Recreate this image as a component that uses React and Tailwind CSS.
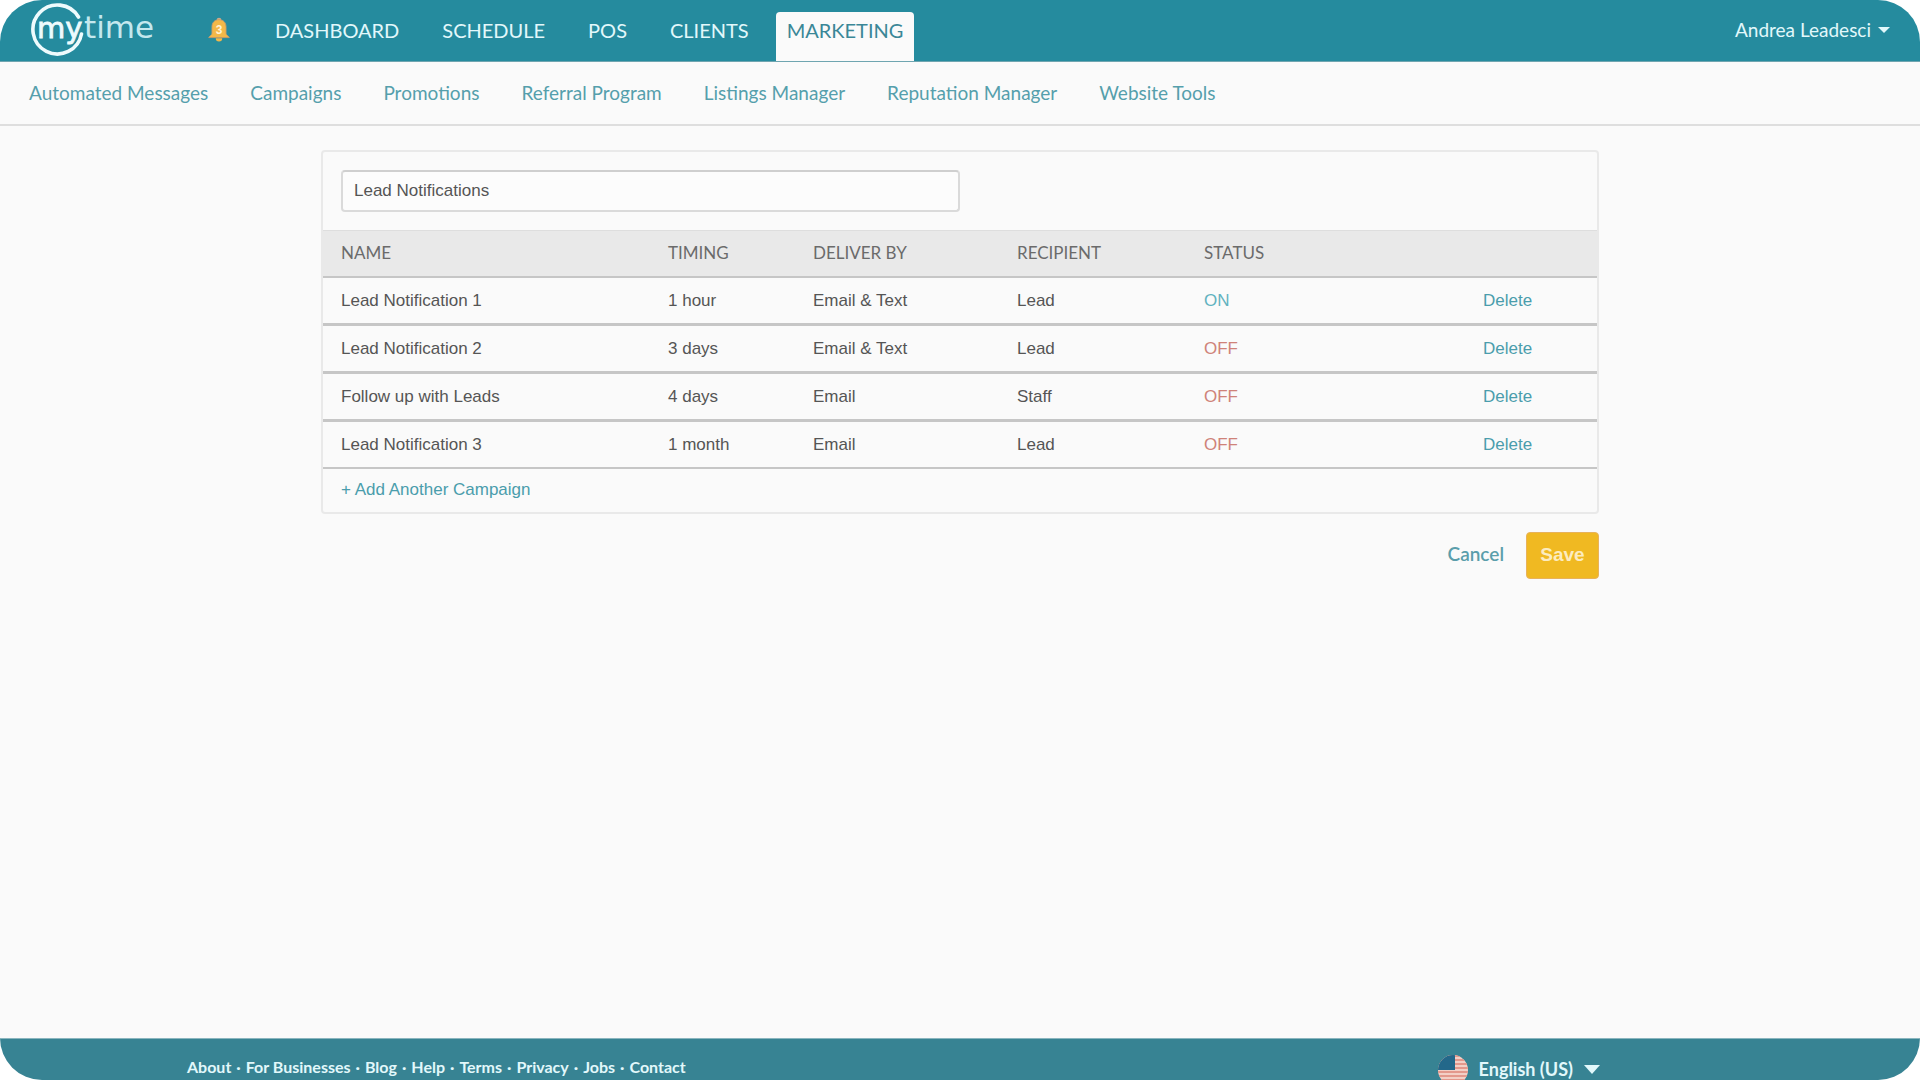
import React, { useState } from "react";

const mainLinks = ["DASHBOARD", "SCHEDULE", "POS", "CLIENTS"];

const subLinks = [
  "Automated Messages",
  "Campaigns",
  "Promotions",
  "Referral Program",
  "Listings Manager",
  "Reputation Manager",
  "Website Tools",
];

const footerLinks = ["About", "For Businesses", "Blog", "Help", "Terms", "Privacy", "Jobs", "Contact"];

const campaigns = [
  { name: "Lead Notification 1", timing: "1 hour", deliver: "Email & Text", recipient: "Lead", on: true },
  { name: "Lead Notification 2", timing: "3 days", deliver: "Email & Text", recipient: "Lead", on: false },
  { name: "Follow up with Leads", timing: "4 days", deliver: "Email", recipient: "Staff", on: false },
  { name: "Lead Notification 3", timing: "1 month", deliver: "Email", recipient: "Lead", on: false },
];

function Logo() {
  return (
    <svg width="128" height="60" viewBox="0 0 128 60" fill="none" aria-label="mytime">
      <path d="M48.5 17 A24.5 24.5 0 1 0 51.5 34" stroke="#eefbfd" strokeWidth="3.6" strokeLinecap="round" />
      <text
        x="7"
        y="38"
        fill="#eefbfd"
        stroke="#eefbfd"
        strokeWidth="0.8"
        fontSize="29"
        fontFamily="'DejaVu Sans', sans-serif"
      >
        my
      </text>
      <text x="54" y="38" fill="#c4e8ee" fontSize="31" fontFamily="'DejaVu Sans', sans-serif">
        time
      </text>
    </svg>
  );
}

function Bell() {
  return (
    <svg width="24" height="26" viewBox="0 0 22 24" aria-hidden="true">
      <circle cx="11" cy="3" r="2.2" fill="#c9a98c" />
      <path
        d="M11 2.5c-4.5 0-6.5 3-6.5 7v5.5c0 2-2 2-3 4h19c-1-2-3-2-3-4V9.500c0-4-2-7-6.500-7z"
        fill="#f3b848"
        stroke="#c99b6a"
        strokeWidth="0.8"
      />
      <path d="M8 19.5a3 3 0 0 0 6 0z" fill="#f3b848" />
      <text
        x="11"
        y="16"
        textAnchor="middle"
        fontSize="11"
        fontWeight="700"
        fill="#fff3d6"
        fontFamily="'Liberation Sans', sans-serif"
      >
        3
      </text>
    </svg>
  );
}

function Flag() {
  return (
    <svg width="30" height="30" viewBox="0 0 30 30" aria-hidden="true">
      <clipPath id="flag">
        <circle cx="15" cy="15" r="15" />
      </clipPath>
      <g clipPath="url(#flag)">
        <rect width="30" height="30" fill="#f3cfc6" />
        {[0, 4, 8, 12, 16, 20, 24, 28].map((y) => (
          <rect key={y} y={y} width="30" height="2" fill="#e3988c" />
        ))}
        <rect width="17" height="15" fill="#23688a" />
      </g>
    </svg>
  );
}

function Caret({ className }) {
  return (
    <svg viewBox="0 0 12 6" preserveAspectRatio="none" className={className} aria-hidden="true">
      <path d="M0 0h12L6 6z" fill="currentColor" />
    </svg>
  );
}

export default function App() {
  const [title, setTitle] = useState("Lead Notifications");

  return (
    <div className="bg-white font-['Lato',sans-serif]">
      <div className="min-h-screen flex flex-col overflow-hidden rounded-[42px] bg-[#fafafa]">
        <header className="h-[62px] flex items-start justify-between bg-[#258b9e] border-b border-[#6fa5b0] px-[30px]">
          <div className="flex items-start">
            <a href="#home">
              <Logo />
            </a>
            <a href="#alerts" aria-label="Alerts" className="ml-[49px] mt-[17px]">
              <Bell />
            </a>
            <nav className="ml-[44px] mt-3 flex items-start gap-[43px] text-xl text-[#e2f8fb]">
              {mainLinks.map((l) => (
                <a key={l} href="#nav" className="h-9 leading-9">
                  {l}
                </a>
              ))}
              <a
                href="#marketing"
                className="-ml-4 h-[49px] rounded-t px-[11px] bg-[#fafafa] text-[#3a8797] leading-9"
              >
                MARKETING
              </a>
            </nav>
          </div>
          <button className="mt-3 h-9 flex items-center gap-[7px] text-[19px] text-[#e2f8fb]">
            Andrea Leadesci
            <Caret className="w-3 h-[6px]" />
          </button>
        </header>

        <nav className="h-[64px] flex items-center gap-[42px] pl-[29px] border-b-2 border-[#dedede] text-[19px] text-[#559fac]">
          {subLinks.map((l) => (
            <a key={l} href="#sub">
              {l}
            </a>
          ))}
        </nav>

        <main className="flex-1 w-full max-w-[1278px] mx-auto pt-6 font-['Liberation_Sans',Arial,sans-serif] text-[17px] text-[#555]">
          <div className="rounded border-2 border-[#e9e9e9]">
            <div className="px-[18px] py-[18px]">
              <input
                aria-label="Campaign name"
                value={title}
                onChange={(e) => setTitle(e.target.value)}
                className="block w-1/2 h-[42px] px-[11px] rounded border-2 border-[#dadada] border-t-[#cfcfcf] bg-[#fcfcfc]"
              />
            </div>
            <table className="w-full table-fixed border-collapse text-left">
              <colgroup>
                <col className="w-[345px]" />
                <col className="w-[145px]" />
                <col className="w-[204px]" />
                <col className="w-[187px]" />
                <col className="w-[279px]" />
                <col />
              </colgroup>
              <thead className="bg-[#e9e9e9] font-['Lato',sans-serif] text-[17px] text-[#6b6b6b]">
                <tr className="h-[46px] border-t border-b-2 border-t-[#dedede] border-b-[#c6c6c6]">
                  <th className="pl-[18px] pb-[2px] font-normal">NAME</th>
                  <th className="pb-[2px] font-normal">TIMING</th>
                  <th className="pb-[2px] font-normal">DELIVER BY</th>
                  <th className="pb-[2px] font-normal">RECIPIENT</th>
                  <th className="pb-[2px] font-normal">STATUS</th>
                  <th></th>
                </tr>
              </thead>
              <tbody>
                {campaigns.map((c) => (
                  <tr key={c.name} className="h-12 last:h-[47px] border-b-3 last:border-b-2 border-[#c6c6c6]">
                    <td className="pl-[18px]">{c.name}</td>
                    <td>{c.timing}</td>
                    <td>{c.deliver}</td>
                    <td>{c.recipient}</td>
                    <td className={c.on ? "text-[#62b2bf]" : "text-[#cf8279]"}>{c.on ? "ON" : "OFF"}</td>
                    <td>
                      <button className="text-[#4a9dac]">Delete</button>
                    </td>
                  </tr>
                ))}
              </tbody>
            </table>
            <div className="h-[43px] flex items-center px-[18px]">
              <button className="text-[#4a9dac]">+ Add Another Campaign</button>
            </div>
          </div>

          <div className="mt-[18px] flex items-center justify-end gap-[22px]">
            <button className="pb-[2px] font-['Lato',sans-serif] font-semibold text-[19px] text-[#5a9eab]">
              Cancel
            </button>
            <button className="h-[47px] w-[73px] rounded border border-[#e8b25a] bg-[#f0b922] text-[19px] font-bold text-[#fcecc0]">
              Save
            </button>
          </div>
        </main>

        <footer className="h-[42px] bg-[#378393] border-t border-[#8ab5be] font-bold text-[#e2f8fb]">
          <div className="h-[41px] w-5/6 pl-[187px] flex items-start justify-between">
            <div className="mt-4 flex gap-[5px] text-base">
              {footerLinks.map((l, i) => (
                <React.Fragment key={l}>
                  {i > 0 && <span>·</span>}
                  <a href="#footer">{l}</a>
                </React.Fragment>
              ))}
            </div>
            <button className="mt-4 h-[25px] flex items-start gap-[11px] text-lg">
              <Flag />
              <span className="pt-1 leading-5">English (US)</span>
              <Caret className="mt-[10px] w-4 h-[9px]" />
            </button>
          </div>
        </footer>
      </div>
    </div>
  );
}
